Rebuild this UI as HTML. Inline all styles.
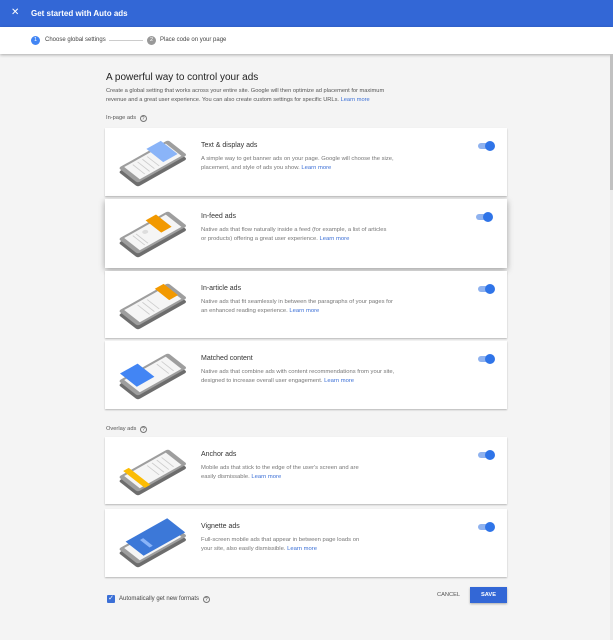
<!DOCTYPE html>
<html><head><meta charset="utf-8"><style>
*{box-sizing:border-box;margin:0;padding:0}
body{width:613px;height:640px;overflow:hidden;background:#f4f4f4;font-family:"Liberation Sans",sans-serif;position:relative;color:#333}
.hdr{position:absolute;left:0;top:0;width:613px;height:27px;background:#3367d6;color:#fff}
.hdr .x{position:absolute;left:11px;top:7px;font-size:10px}
.hdr .t{position:absolute;left:31px;top:9px;font-size:8px;font-weight:bold}
.step{position:absolute;left:0;top:27px;width:613px;height:27px;background:#fff;box-shadow:0 1px 3px rgba(0,0,0,.3);font-size:6px;color:#444}
.c{position:absolute;top:9px;width:9px;height:9px;border-radius:50%;color:#fff;font-size:5.5px;text-align:center;line-height:9px}
.abs{position:absolute}
h1{position:absolute;left:106px;top:72px;font-size:10px;font-weight:normal;color:#222}
.intro{position:absolute;left:106px;top:87px;font-size:5.7px;line-height:9px;color:#555;width:300px}
a{color:#3b6fd6;text-decoration:none}
.lbl{position:absolute;left:106px;font-size:5.7px;color:#555}
.q{display:inline-block;width:7px;height:7px;border:0.8px solid #777;border-radius:50%;font-size:5px;text-align:center;line-height:6px;margin-left:2px;vertical-align:-1px}
.card{position:absolute;left:105px;width:402px;background:#fff;box-shadow:0 1px 1.5px rgba(0,0,0,.25)}
.card.el{box-shadow:0 2px 6px rgba(0,0,0,.35)}
.card svg{position:absolute;left:8px;top:6px}
.card .tt{position:absolute;left:96px;top:14px;font-size:7px;color:#333}
.card .d{position:absolute;left:96px;top:27px;font-size:5.85px;line-height:9.3px;color:#777;white-space:nowrap}
.tg{position:absolute;left:373px;top:15px;width:16px;height:6px;border-radius:3px;background:#8fb2ef}
.tg:after{content:"";position:absolute;left:7px;top:-2.5px;width:10px;height:10px;border-radius:50%;background:#2f74e8}
</style></head><body>
<div class="hdr"><span class="x">✕</span><span class="t">Get started with Auto ads</span></div>
<div class="step">
<div class="c" style="left:31px;background:#4285f4">1</div><span class="abs" style="left:45px;top:10px">Choose global settings</span>
<div class="abs" style="left:109px;top:13px;width:34px;height:1px;background:#ccc"></div>
<div class="c" style="left:147px;background:#999">2</div><span class="abs" style="left:160px;top:10px">Place code on your page</span>
</div>
<div class="abs" style="left:610px;top:54px;width:3px;height:586px;background:#ececec"></div>
<div class="abs" style="left:610px;top:54px;width:3px;height:136px;background:#c1c1c1"></div>
<h1>A powerful way to control your ads</h1>
<div class="intro">Create a global setting that works across your entire site. Google will then optimize ad placement for maximum revenue and a great user experience. You can also create custom settings for specific URLs. <a>Learn more</a></div>
<div class="lbl" style="top:115px">In-page ads <span class="q">?</span></div>

<div class="card" style="top:128px;height:68px">
<svg width="90" height="60"><g transform="matrix(0.6 0.47 -0.8 0.45 55 10)"><rect width="32" height="62" rx="3" fill="#6d6d6d"/></g><g transform="matrix(0.6 0.47 -0.8 0.45 55 6)"><rect width="32" height="62" rx="3" fill="#9e9e9e"/><rect x="3" y="5" width="26" height="52" fill="#f5f5f5"/><rect x="6" y="30" width="20" height="1" fill="#ccc"/><rect x="6" y="36" width="20" height="1" fill="#ccc"/><rect x="6" y="42" width="20" height="1" fill="#ccc"/><rect x="6" y="48" width="20" height="1" fill="#ccc"/><rect x="-4" y="6" width="28" height="18" fill="#8ab4f8"/></g></svg>
<div class="tt">Text &amp; display ads</div>
<div class="d">A simple way to get banner ads on your page. Google will choose the size,<br>placement, and style of ads you show. <a>Learn more</a></div>
<div class="tg"></div></div>

<div class="card el" style="top:199px;height:69px">
<svg width="90" height="60"><g transform="matrix(0.6 0.47 -0.8 0.45 55 10)"><rect width="32" height="62" rx="3" fill="#6d6d6d"/></g><g transform="matrix(0.6 0.47 -0.8 0.45 55 6)"><rect width="32" height="62" rx="3" fill="#9e9e9e"/><rect x="3" y="5" width="26" height="52" fill="#f5f5f5"/><circle cx="10" cy="36" r="3" fill="#ddd"/><rect x="6" y="44" width="20" height="1" fill="#ccc"/><rect x="6" y="48" width="20" height="1" fill="#ccc"/><rect x="-4" y="12" width="26" height="13" fill="#f29900"/></g></svg>
<div class="tt">In-feed ads</div>
<div class="d">Native ads that flow naturally inside a feed (for example, a list of articles<br>or products) offering a great user experience. <a>Learn more</a></div>
<div class="tg" style="left:371px"></div></div>

<div class="card" style="top:271px;height:67px">
<svg width="90" height="60"><g transform="matrix(0.6 0.47 -0.8 0.45 55 10)"><rect width="32" height="62" rx="3" fill="#6d6d6d"/></g><g transform="matrix(0.6 0.47 -0.8 0.45 55 6)"><rect width="32" height="62" rx="3" fill="#9e9e9e"/><rect x="3" y="5" width="26" height="52" fill="#f5f5f5"/><rect x="6" y="30" width="20" height="1" fill="#ccc"/><rect x="6" y="36" width="20" height="1" fill="#ccc"/><rect x="6" y="42" width="20" height="1" fill="#ccc"/><rect x="-2" y="4" width="24" height="11" fill="#f29900"/></g></svg>
<div class="tt">In-article ads</div>
<div class="d">Native ads that fit seamlessly in between the paragraphs of your pages for<br>an enhanced reading experience. <a>Learn more</a></div>
<div class="tg"></div></div>

<div class="card" style="top:341px;height:68px">
<svg width="90" height="60"><g transform="matrix(0.6 0.47 -0.8 0.45 55 10)"><rect width="32" height="62" rx="3" fill="#6d6d6d"/></g><g transform="matrix(0.6 0.47 -0.8 0.45 55 6)"><rect width="32" height="62" rx="3" fill="#9e9e9e"/><rect x="3" y="5" width="26" height="52" fill="#f5f5f5"/><rect x="6" y="12" width="20" height="1" fill="#ccc"/><rect x="6" y="18" width="20" height="1" fill="#ccc"/><rect x="-8" y="32" width="28" height="22" fill="#4285f4"/></g></svg>
<div class="tt">Matched content</div>
<div class="d">Native ads that combine ads with content recommendations from your site,<br>designed to increase overall user engagement. <a>Learn more</a></div>
<div class="tg"></div></div>

<div class="lbl" style="top:426px">Overlay ads <span class="q">?</span></div>

<div class="card" style="top:437px;height:67px">
<svg width="90" height="60"><g transform="matrix(0.6 0.47 -0.8 0.45 55 10)"><rect width="32" height="62" rx="3" fill="#6d6d6d"/></g><g transform="matrix(0.6 0.47 -0.8 0.45 55 6)"><rect width="32" height="62" rx="3" fill="#9e9e9e"/><rect x="3" y="5" width="26" height="52" fill="#f5f5f5"/><rect x="6" y="12" width="20" height="1" fill="#ccc"/><rect x="6" y="18" width="20" height="1" fill="#ccc"/><rect x="6" y="24" width="20" height="1" fill="#ccc"/><rect x="6" y="30" width="20" height="1" fill="#ccc"/><rect x="-4" y="46" width="36" height="7" fill="#fbbc04"/></g></svg>
<div class="tt">Anchor ads</div>
<div class="d">Mobile ads that stick to the edge of the user's screen and are<br>easily dismissable. <a>Learn more</a></div>
<div class="tg"></div></div>

<div class="card" style="top:509px;height:68px">
<svg width="90" height="60"><g transform="matrix(0.6 0.47 -0.8 0.45 55 10)"><rect width="32" height="62" rx="3" fill="#6d6d6d"/></g><g transform="matrix(0.6 0.47 -0.8 0.45 55 6)"><rect width="32" height="62" rx="3" fill="#9e9e9e"/><rect x="3" y="5" width="26" height="52" fill="#f5f5f5"/><rect x="-4" y="-2" width="30" height="52" fill="#3c78d8"/><rect x="4" y="34" width="16" height="4" fill="#8ab4f8"/></g></svg>
<div class="tt">Vignette ads</div>
<div class="d">Full-screen mobile ads that appear in between page loads on<br>your site, also easily dismissible. <a>Learn more</a></div>
<div class="tg"></div></div>

<div class="abs" style="left:107px;top:595px;width:8px;height:8px;background:#3b6fd6;border-radius:1px;color:#fff;font-size:7px;line-height:8px;text-align:center">✓</div>
<div class="abs" style="left:119px;top:596px;font-size:6px;color:#444">Automatically get new formats <span class="q">?</span></div>
<div class="abs" style="left:437px;top:592px;font-size:5.7px;color:#555">CANCEL</div>
<div class="abs" style="left:470px;top:587px;width:37px;height:16px;background:#3367d6;box-shadow:0 1px 2px rgba(0,0,0,.3);color:#fff;font-size:5.7px;font-weight:bold;text-align:center;line-height:16px">SAVE</div>
</body></html>
